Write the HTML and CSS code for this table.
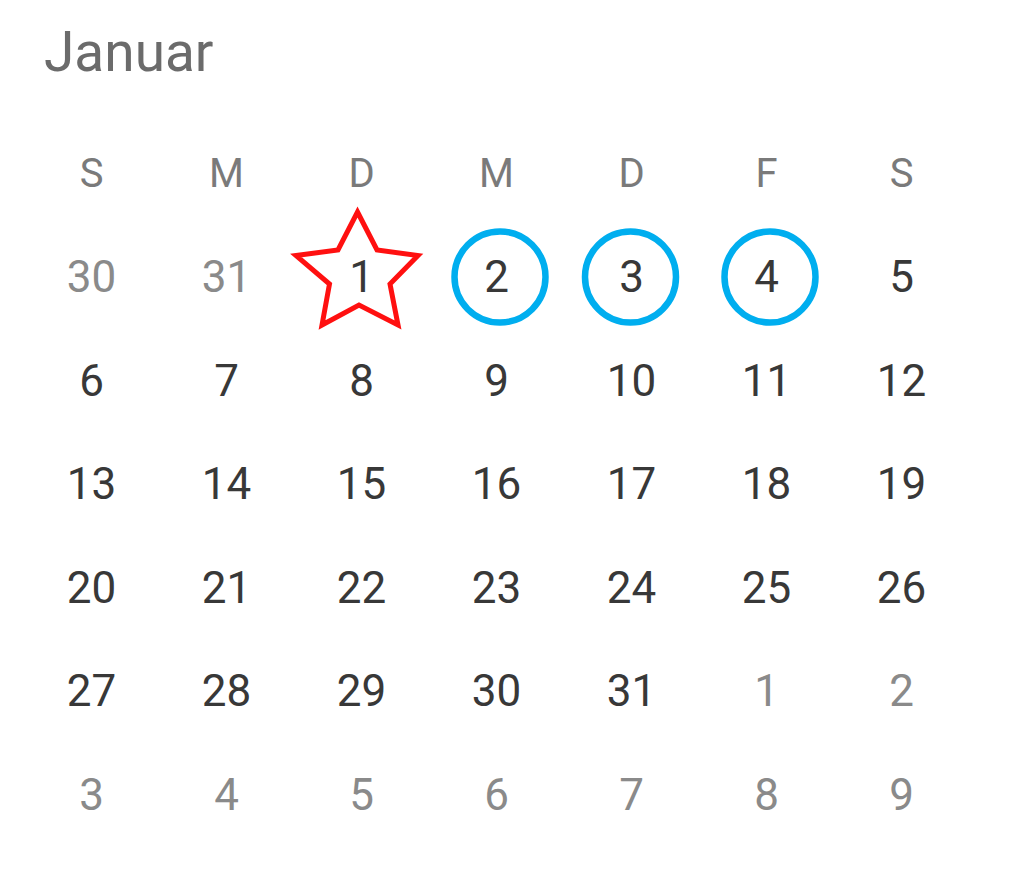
FILE: index.html
```html
<!DOCTYPE html>
<html lang="de">
<head>
<meta charset="utf-8">
<title>Januar</title>
<link rel="stylesheet" href="styles.css">
</head>
<body>
<div class="calendar">
  <h1 class="month">Januar</h1>
  <div class="grid">
    <div class="cell head">S</div>
    <div class="cell head">M</div>
    <div class="cell head">D</div>
    <div class="cell head">M</div>
    <div class="cell head">D</div>
    <div class="cell head">F</div>
    <div class="cell head">S</div>

    <div class="cell other">30</div>
    <div class="cell other">31</div>
    <div class="cell marked">
      <svg class="mark" width="135" height="104" viewBox="294 226 135 104" aria-hidden="true">
        <polygon class="star" points="357.5,212 377,250 418,255.5 390,284 398,325 359,305 322,325 329.5,284 296,255.5 338,250"/>
      </svg>
      <span>1</span>
    </div>
    <div class="cell marked">
      <svg class="mark" width="135" height="104" viewBox="429 226 135 104" aria-hidden="true">
        <circle class="ring" cx="500" cy="277" r="45.5"/>
      </svg>
      <span>2</span>
    </div>
    <div class="cell marked">
      <svg class="mark" width="135" height="104" viewBox="564 226 135 104" aria-hidden="true">
        <circle class="ring" cx="630.5" cy="277" r="45.5"/>
      </svg>
      <span>3</span>
    </div>
    <div class="cell marked">
      <svg class="mark" width="135" height="104" viewBox="699 226 135 104" aria-hidden="true">
        <circle class="ring" cx="770" cy="277" r="45.5"/>
      </svg>
      <span>4</span>
    </div>
    <div class="cell">5</div>

    <div class="cell">6</div>
    <div class="cell">7</div>
    <div class="cell">8</div>
    <div class="cell">9</div>
    <div class="cell">10</div>
    <div class="cell">11</div>
    <div class="cell">12</div>

    <div class="cell">13</div>
    <div class="cell">14</div>
    <div class="cell">15</div>
    <div class="cell">16</div>
    <div class="cell">17</div>
    <div class="cell">18</div>
    <div class="cell">19</div>

    <div class="cell">20</div>
    <div class="cell">21</div>
    <div class="cell">22</div>
    <div class="cell">23</div>
    <div class="cell">24</div>
    <div class="cell">25</div>
    <div class="cell">26</div>

    <div class="cell">27</div>
    <div class="cell">28</div>
    <div class="cell">29</div>
    <div class="cell">30</div>
    <div class="cell">31</div>
    <div class="cell other">1</div>
    <div class="cell other">2</div>

    <div class="cell other">3</div>
    <div class="cell other">4</div>
    <div class="cell other">5</div>
    <div class="cell other">6</div>
    <div class="cell other">7</div>
    <div class="cell other">8</div>
    <div class="cell other">9</div>
  </div>
</div>
</body>
</html>
```

FILE: styles.css
```css
html, body {
  margin: 0;
  padding: 0;
  background: #ffffff;
}

body {
  font-family: Roboto, "Liberation Sans", Arial, sans-serif;
  width: 1024px;
  height: 876px;
  overflow: hidden;
}

.calendar {
  padding: 0 0 0 24px;
}

.month {
  margin: 0;
  height: 122px;
  padding: 21px 0 0 20px;
  box-sizing: border-box;
  font-size: 55px;
  font-weight: 400;
  line-height: 62px;
  color: #6b6b6b;
}

.grid {
  display: grid;
  grid-template-columns: repeat(7, 135px);
  grid-auto-rows: 103.5px;
}

.cell {
  position: relative;
  display: flex;
  align-items: center;
  justify-content: center;
  font-size: 44px;
  color: #383838;
  line-height: 1;
}

.cell.head {
  color: #7a7a7a;
  font-size: 40px;
}

.cell.other {
  color: #8a8a8a;
}

.cell.marked span {
  position: relative;
}

.mark {
  position: absolute;
  left: 0;
  top: 0;
  overflow: visible;
}

.star {
  fill: none;
  stroke: #ff1010;
  stroke-width: 5;
  stroke-linejoin: miter;
}

.ring {
  fill: none;
  stroke: #00aeef;
  stroke-width: 6.5;
}
```
